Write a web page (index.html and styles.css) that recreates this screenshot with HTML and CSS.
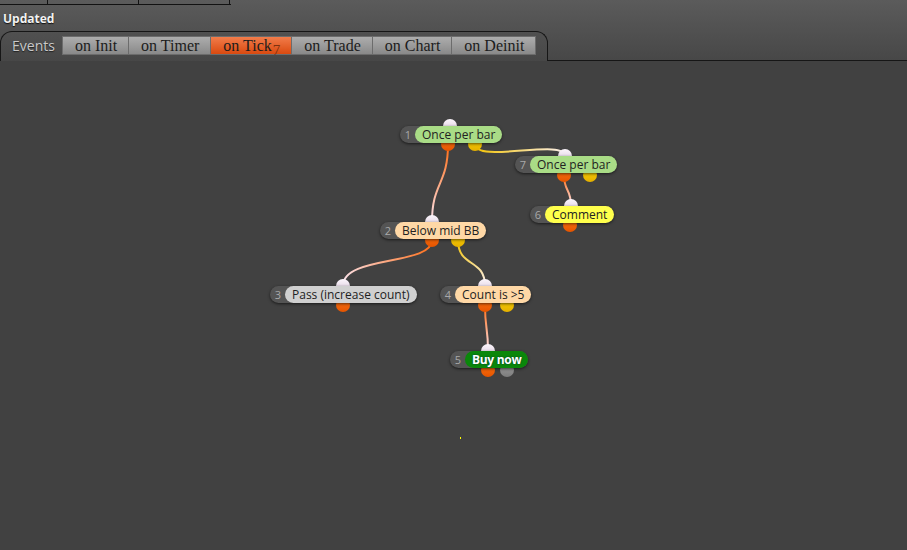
FILE: index.html
```html
<!DOCTYPE html>
<html>
<head>
    <title>Strategy Builder</title>
    <link rel="stylesheet" href="styles.css">
</head>
<body>
    <div id="header">
        <div class="top-table">
            <span class="cell c1"></span>
            <span class="cell c2"></span>
            <span class="cell c3"></span>
        </div>
        <div class="status">Updated</div>
        <div class="tab-row">
            <div class="tab-panel">
                <span class="events-label">Events</span>
                <button class="event-btn">on Init</button>
                <button class="event-btn">on Timer</button>
                <button class="event-btn active">on Tick<span class="tick-count">7</span></button>
                <button class="event-btn">on Trade</button>
                <button class="event-btn">on Chart</button>
                <button class="event-btn">on Deinit</button>
            </div>
            <div class="tab-rest"></div>
        </div>
    </div>

    <div id="canvas">
        <svg class="wires" viewBox="0 61 907 489" width="907" height="489">
            <defs>
                <linearGradient id="w1" gradientUnits="userSpaceOnUse" x1="448" y1="144" x2="432" y2="222">
                    <stop offset="0" stop-color="#ff6a10"/><stop offset="1" stop-color="#fbe4ee"/>
                </linearGradient>
                <linearGradient id="w2" gradientUnits="userSpaceOnUse" x1="475" y1="144" x2="565" y2="156">
                    <stop offset="0" stop-color="#f2c200"/><stop offset="1" stop-color="#fbf0f0"/>
                </linearGradient>
                <linearGradient id="w3" gradientUnits="userSpaceOnUse" x1="564" y1="175" x2="571" y2="206">
                    <stop offset="0" stop-color="#ff6a10"/><stop offset="1" stop-color="#fbe4ee"/>
                </linearGradient>
                <linearGradient id="w4" gradientUnits="userSpaceOnUse" x1="432" y1="240" x2="343" y2="286">
                    <stop offset="0" stop-color="#ff6a10"/><stop offset="1" stop-color="#fbe4ee"/>
                </linearGradient>
                <linearGradient id="w5" gradientUnits="userSpaceOnUse" x1="458" y1="240" x2="485" y2="286">
                    <stop offset="0" stop-color="#f2c200"/><stop offset="1" stop-color="#fbf0f0"/>
                </linearGradient>
                <linearGradient id="w6" gradientUnits="userSpaceOnUse" x1="485" y1="305" x2="488" y2="351">
                    <stop offset="0" stop-color="#ff6a10"/><stop offset="1" stop-color="#fbe4ee"/>
                </linearGradient>
                <linearGradient id="pIn" x1="0" y1="0" x2="0" y2="1">
                    <stop offset="0" stop-color="#fcf6fc"/><stop offset="1" stop-color="#d6c4d8"/>
                </linearGradient>
                <linearGradient id="pOr" x1="0" y1="0" x2="0" y2="1">
                    <stop offset="0" stop-color="#ff7412"/><stop offset="1" stop-color="#e45400"/>
                </linearGradient>
                <linearGradient id="pYe" x1="0" y1="0" x2="0" y2="1">
                    <stop offset="0" stop-color="#ffd400"/><stop offset="1" stop-color="#e4b000"/>
                </linearGradient>
                <linearGradient id="pGr" x1="0" y1="0" x2="0" y2="1">
                    <stop offset="0" stop-color="#a0a0a0"/><stop offset="1" stop-color="#7c7c7c"/>
                </linearGradient>
            </defs>

            <!-- wires -->
            <path d="M448,144 C448,185 432,182 432,222" stroke="url(#w1)"/>
            <path d="M475,144 C475,164 565,138 565,156" stroke="url(#w2)"/>
            <path d="M564,175 C564,192 571,188 571,206" stroke="url(#w3)"/>
            <path d="M432,240 C432,266 343,255 343,286" stroke="url(#w4)"/>
            <path d="M458,240 C458,268 485,258 485,286" stroke="url(#w5)"/>
            <path d="M485,305 C485,330 488,326 488,351" stroke="url(#w6)"/>

            <!-- ports -->
            <g class="ports">
                <circle cx="450" cy="126" r="7" fill="url(#pIn)"/>
                <circle cx="448" cy="144" r="7" fill="url(#pOr)"/>
                <circle cx="475" cy="144" r="7" fill="url(#pYe)"/>

                <circle cx="565" cy="156" r="7" fill="url(#pIn)"/>
                <circle cx="564" cy="175" r="7" fill="url(#pOr)"/>
                <circle cx="590" cy="175" r="7" fill="url(#pYe)"/>

                <circle cx="571" cy="206" r="7" fill="url(#pIn)"/>
                <circle cx="570" cy="225" r="7" fill="url(#pOr)"/>

                <circle cx="432" cy="222" r="7" fill="url(#pIn)"/>
                <circle cx="432" cy="240" r="7" fill="url(#pOr)"/>
                <circle cx="458" cy="240" r="7" fill="url(#pYe)"/>

                <circle cx="343" cy="286" r="7" fill="url(#pIn)"/>
                <circle cx="343" cy="305" r="7" fill="url(#pOr)"/>

                <circle cx="485" cy="286" r="7" fill="url(#pIn)"/>
                <circle cx="485" cy="305" r="7" fill="url(#pOr)"/>
                <circle cx="507" cy="305" r="7" fill="url(#pYe)"/>

                <circle cx="488" cy="351" r="7" fill="url(#pIn)"/>
                <circle cx="488" cy="370" r="7" fill="url(#pOr)"/>
                <circle cx="507" cy="370" r="7" fill="url(#pGr)"/>
            </g>

            <rect x="460" y="437" width="1" height="2" fill="#ffff00"/>
        </svg>

        <div class="node" style="left:400px;top:65px"><span class="num">1</span><span class="label green">Once per bar</span></div>
        <div class="node" style="left:515px;top:95px"><span class="num">7</span><span class="label green">Once per bar</span></div>
        <div class="node" style="left:530px;top:145px"><span class="num">6</span><span class="label yellow">Comment</span></div>
        <div class="node" style="left:380px;top:161px"><span class="num">2</span><span class="label peach">Below mid BB</span></div>
        <div class="node" style="left:270px;top:225px"><span class="num">3</span><span class="label grey">Pass (increase count)</span></div>
        <div class="node" style="left:440px;top:225px"><span class="num">4</span><span class="label peach">Count is &gt;5</span></div>
        <div class="node" style="left:450px;top:290px"><span class="num">5</span><span class="label buy">Buy now</span></div>
    </div>
</body>
</html>
```

FILE: styles.css
```css
html, body {
    margin: 0;
    height: 100%;
    background-color: #414141;
    font-family: 'Open Sans', 'DejaVu Sans', sans-serif;
    overflow: hidden;
}

#header {
    height: 61px;
    background: linear-gradient(to bottom, #5b5b5b, #474747);
}

.top-table {
    display: flex;
    width: 231px;
    height: 4px;
    border-bottom: 1px solid #121212;
}

.cell {
    height: 4px;
    border-right: 1px solid #121212;
}

.c1 { width: 47px; }
.c2 { width: 90px; }
.c3 { width: 90px; }

.status {
    margin-top: 5px;
    padding-left: 3px;
    height: 18px;
    line-height: 18px;
    font-size: 12px;
    font-weight: bold;
    color: #f2f2f2;
    text-shadow: 0 1px 1px #111;
}

.tab-row {
    display: flex;
    margin-top: 3px;
    height: 30px;
}

.tab-panel {
    display: flex;
    align-items: flex-start;
    box-sizing: border-box;
    width: 548px;
    height: 30px;
    padding: 4px 0 0 11px;
    border: 1px solid #161616;
    border-bottom: none;
    border-radius: 12px 12px 0 0;
}

.tab-rest {
    flex: 1;
    box-sizing: border-box;
    height: 30px;
    border-bottom: 1px solid #161616;
}

.events-label {
    height: 19px;
    line-height: 19px;
    margin-right: 7px;
    font-size: 14px;
    color: #c9c9c9;
    text-shadow: 0 1px 1px #222;
}

.event-btn {
    height: 19px;
    margin: 0;
    padding: 0 11px 0 12px;
    border: 1px solid #6c6c6c;
    border-left: none;
    background: linear-gradient(to bottom, #adadad, #898989);
    font-family: 'Liberation Serif', 'DejaVu Serif', serif;
    font-size: 16px;
    line-height: 16px;
    color: #1c1c1c;
    white-space: nowrap;
    overflow: visible;
}

.event-btn:first-of-type {
    border-left: 1px solid #6c6c6c;
}

.event-btn.active {
    background: linear-gradient(to bottom, #f27c4a, #d94a10);
}

.tick-count {
    position: relative;
    top: 4px;
    margin-left: 1px;
    font-size: 15px;
    color: #7e3210;
}

#canvas {
    position: relative;
    height: 489px;
    background-color: #414141;
}

.wires {
    position: absolute;
    left: 0;
    top: 0;
}

.wires path {
    fill: none;
    stroke-width: 2;
}

.node {
    position: absolute;
    display: flex;
    height: 17px;
    border-radius: 9px;
    background-color: #545454;
    box-shadow: 0 1px 3px rgba(0, 0, 0, 0.6);
}

.num {
    width: 14px;
    padding-left: 1px;
    text-align: center;
    font-size: 11px;
    line-height: 17px;
    color: #a9a9a9;
}

.label {
    padding: 0 7px;
    border-radius: 9px;
    font-size: 12px;
    line-height: 17px;
    color: #222;
    white-space: nowrap;
}

.green { background-color: #a9dc86; }
.yellow { background-color: #ffff4c; }
.peach { background-color: #ffd8a6; }
.grey { background-color: #d0d0d0; }

.buy {
    background-color: #0a870a;
    color: #fff;
    font-weight: bold;
    font-size: 12px;
    letter-spacing: -0.3px;
    text-shadow: 0 0 2px #033;
}
```
